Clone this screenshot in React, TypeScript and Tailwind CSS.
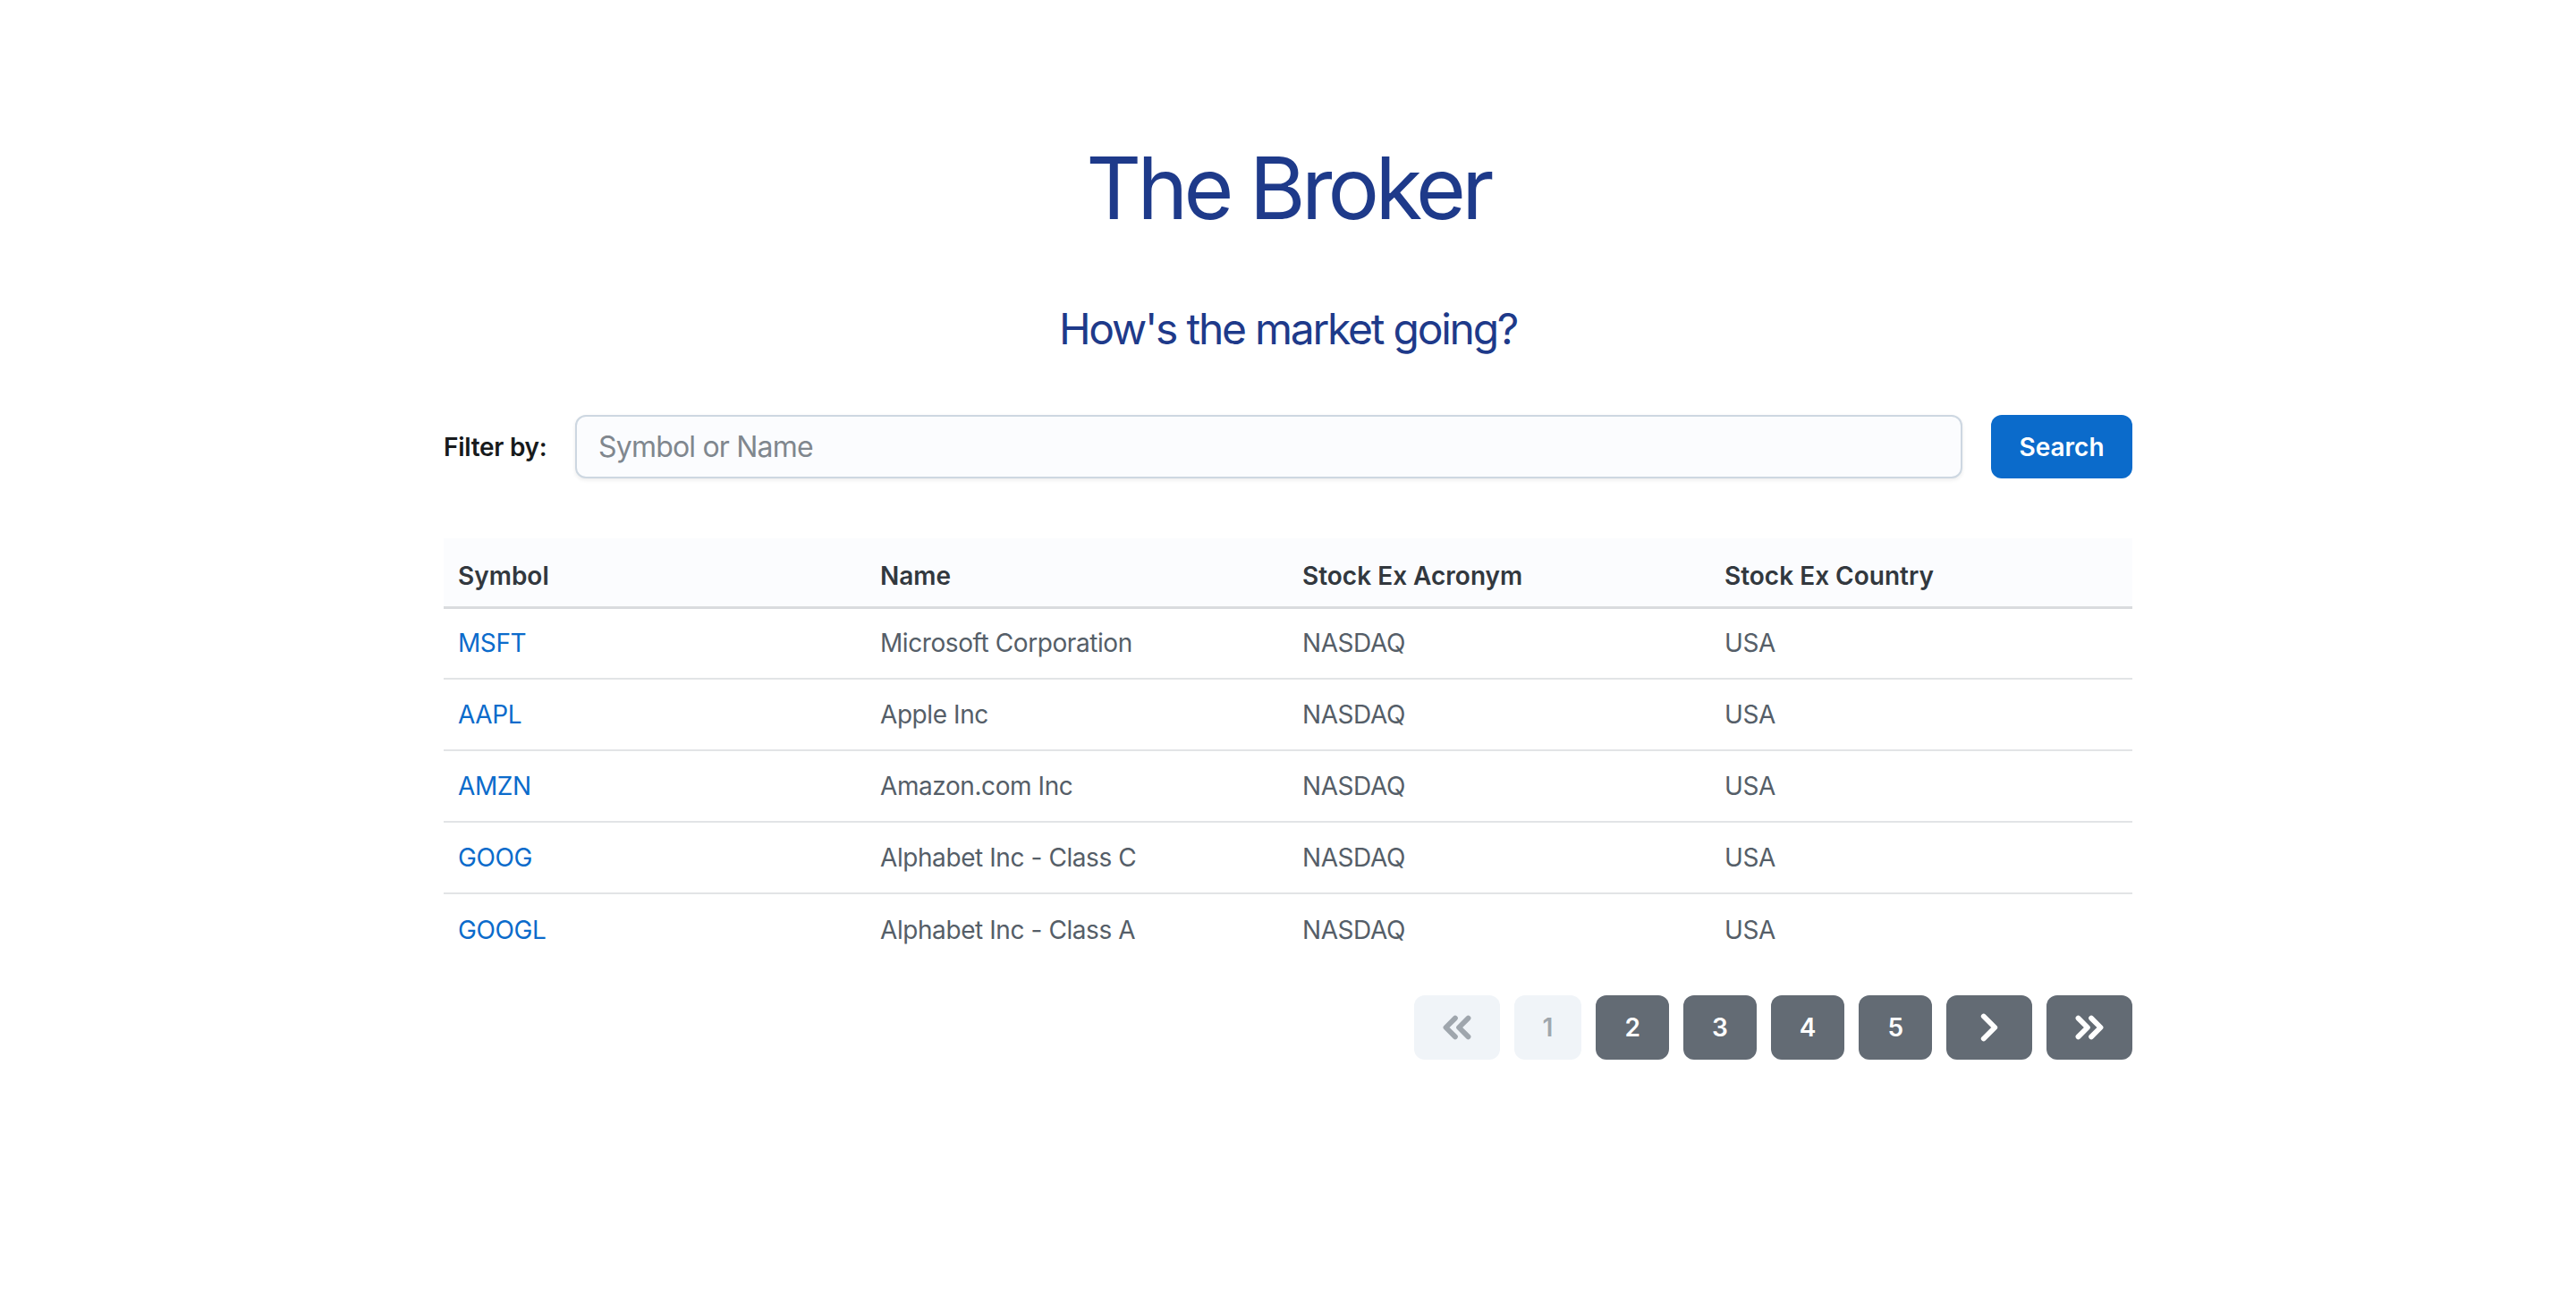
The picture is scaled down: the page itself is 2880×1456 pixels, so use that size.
import React from "react";
import { ChevronsLeft, ChevronRight, ChevronsRight } from "lucide-react";

const rows = [
  { s: "MSFT", n: "Microsoft Corporation", a: "NASDAQ", c: "USA" },
  { s: "AAPL", n: "Apple Inc", a: "NASDAQ", c: "USA" },
  { s: "AMZN", n: "Amazon.com Inc", a: "NASDAQ", c: "USA" },
  { s: "GOOG", n: "Alphabet Inc - Class C", a: "NASDAQ", c: "USA" },
  { s: "GOOGL", n: "Alphabet Inc - Class A", a: "NASDAQ", c: "USA" },
];

export default function App() {
  return (
    <div className="min-h-screen bg-white font-['Inter','Noto_Sans',sans-serif]">
      <div className="mx-auto w-[1888px] pt-[162px]">
        <h1 className="text-center text-[96px] leading-none font-normal tracking-[-0.05em] text-[#1e3a8a]">
          The Broker
        </h1>
        <h2 className="mt-[86px] text-center text-[48px] leading-none font-normal tracking-[-0.047em] text-[#1e3a8a]">
          How's the market going?
        </h2>

        <div className="mt-[72px] flex items-center h-[71px]">
          <label className="shrink-0 w-[116px] mr-[31px] text-[28px] font-semibold tracking-[-0.01em] text-[#171a1c] whitespace-nowrap">
            Filter by:
          </label>
          <div className="flex-1 h-[71px] rounded-[12px] border-2 border-[#cdd7e1] bg-[#fbfcfe] shadow-[0_2px_4px_rgba(21,21,21,0.08)] flex items-center px-[24px]">
            <input
              className="w-full bg-transparent outline-none text-[32px] tracking-[-0.025em] text-[#171a1c] placeholder:text-[#80878e]"
              placeholder="Symbol or Name"
            />
          </div>
          <button className="ml-[32px] h-[71px] w-[158px] rounded-[12px] bg-[#0b6bcb] text-white text-[28px] font-semibold">
            Search
          </button>
        </div>

        <table className="mt-[67px] w-full table-fixed border-collapse">
          <thead>
            <tr className="bg-[#fbfcfe] border-b-[3px] border-[#d9dbde]">
              {["Symbol", "Name", "Stock Ex Acronym", "Stock Ex Country"].map((h) => (
                <th
                  key={h}
                  className="h-[77px] pt-[8px] px-[16px] text-left text-[28px] font-semibold text-[#32383e]"
                >
                  {h}
                </th>
              ))}
            </tr>
          </thead>
          <tbody>
            {rows.map((r, i) => (
              <tr
                key={r.s}
                className={i < rows.length - 1 ? "border-b-2 border-[#e2e4e6]" : ""}
              >
                <td className="h-[80px] px-[16px] text-[28px] tracking-[-0.015em] text-[#0b6bcb]">{r.s}</td>
                <td className="h-[80px] px-[16px] text-[28px] tracking-[-0.015em] text-[#555e68]">{r.n}</td>
                <td className="h-[80px] px-[16px] text-[28px] tracking-[-0.015em] text-[#555e68]">{r.a}</td>
                <td className="h-[80px] px-[16px] text-[28px] tracking-[-0.015em] text-[#555e68]">{r.c}</td>
              </tr>
            ))}
          </tbody>
        </table>

        <div className="mt-[34px] flex justify-end gap-[16px]">
          <button className="h-[72px] w-[96px] rounded-[12px] bg-[#f0f4f8] text-[#9fa6ad] flex items-center justify-center">
            <ChevronsLeft size={50} strokeWidth={2.8} />
          </button>
          <button className="h-[72px] px-[32px] rounded-[12px] bg-[#f0f4f8] text-[#9fa6ad] text-[28px] font-semibold">
            1
          </button>
          {["2", "3", "4", "5"].map((p) => (
            <button
              key={p}
              className="h-[72px] px-[32px] rounded-[12px] bg-[#636b74] text-white text-[28px] font-semibold"
            >
              {p}
            </button>
          ))}
          <button className="h-[72px] w-[96px] rounded-[12px] bg-[#636b74] text-white flex items-center justify-center">
            <ChevronRight size={50} strokeWidth={2.8} />
          </button>
          <button className="h-[72px] w-[96px] rounded-[12px] bg-[#636b74] text-white flex items-center justify-center">
            <ChevronsRight size={50} strokeWidth={2.8} />
          </button>
        </div>
      </div>
    </div>
  );
}
